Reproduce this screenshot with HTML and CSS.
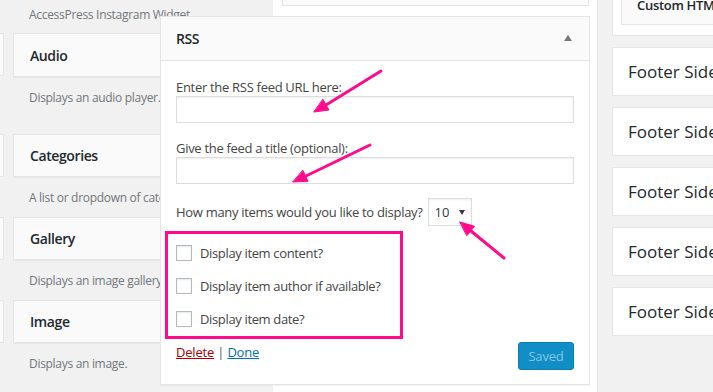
FILE: index.html
```html
<!DOCTYPE html>
<html lang="en">
<head>
  <meta charset="UTF-8">
  <meta name="viewport" content="width=device-width, initial-scale=1">
  <title>Widgets</title>
  <link rel="stylesheet" href="styles.css">
</head>
<body>
  <div class="screen">
    <!-- Доступные виджеты -->
    <div class="available">
      <p class="widget-desc first-desc">AccessPress Instagram Widget</p>
      <div class="row">
        <div class="stub"></div>
        <div class="widget">
          <div class="widget-top tall">Audio</div>
          <p class="widget-desc wide-gap">Displays an audio player.</p>
        </div>
      </div>
      <div class="row">
        <div class="stub"></div>
        <div class="widget">
          <div class="widget-top">Categories</div>
          <p class="widget-desc">A list or dropdown of categories.</p>
        </div>
      </div>
      <div class="row">
        <div class="stub"></div>
        <div class="widget">
          <div class="widget-top">Gallery</div>
          <p class="widget-desc">Displays an image gallery.</p>
        </div>
      </div>
      <div class="row">
        <div class="stub"></div>
        <div class="widget">
          <div class="widget-top">Image</div>
          <p class="widget-desc">Displays an image.</p>
        </div>
      </div>
    </div>

    <!-- Основной сайдбар с открытым виджетом RSS -->
    <div class="sidebar-main">
      <div class="prev-widget"></div>
      <div class="rss">
        <div class="rss-head">
          <span class="rss-title">RSS</span>
          <span class="toggle"></span>
        </div>
        <div class="rss-body">
          <label class="field-label" for="rssUrl">Enter the RSS feed URL here:</label>
          <input class="text-input" id="rssUrl" type="text">
          <label class="field-label gap" for="rssTitle">Give the feed a title (optional):</label>
          <input class="text-input" id="rssTitle" type="text">
          <div class="items-row">
            <span>How many items would you like to display?</span>
            <span class="select-wrap">
              <select class="count-select">
                <option>10</option>
              </select>
            </span>
          </div>
          <div class="options">
            <label class="option"><input type="checkbox" class="check"> Display item content?</label>
            <label class="option"><input type="checkbox" class="check"> Display item author if available?</label>
            <label class="option"><input type="checkbox" class="check"> Display item date?</label>
          </div>
          <div class="rss-foot">
            <span class="links"><a href="#" class="link-delete">Delete</a> <span class="sep">|</span> <a href="#" class="link-done">Done</a></span>
            <button class="btn-saved" disabled>Saved</button>
          </div>
        </div>
      </div>
    </div>

    <!-- Свернутые сайдбары -->
    <div class="sidebar-right">
      <div class="holder">
        <div class="custom-html">Custom HTML</div>
      </div>
      <div class="collapsed">Footer Sidebar 1</div>
      <div class="collapsed">Footer Sidebar 2</div>
      <div class="collapsed">Footer Sidebar 3</div>
      <div class="collapsed">Footer Sidebar 4</div>
      <div class="collapsed">Footer Sidebar 5</div>
    </div>

    <!-- Стрелки-пометки -->
    <svg class="marks" width="713" height="392" viewBox="0 0 713 392">
      <g stroke="#ff0a8c" stroke-width="3" stroke-linecap="round" fill="#ff0a8c">
        <line x1="381" y1="71" x2="326" y2="105"/>
        <polygon points="314,112 329,110 323,99.6" stroke-width="1"/>
        <line x1="370" y1="145" x2="306" y2="176"/>
        <polygon points="293,182 308,181.3 303,170.5" stroke-width="1"/>
        <line x1="504" y1="258" x2="471" y2="231"/>
        <polygon points="460,222 474.6,226.3 467,235.5" stroke-width="1"/>
      </g>
    </svg>
  </div>
</body>
</html>
```

FILE: styles.css
```css
/* Общие */
body { margin:0; background:#f1f1f1; font-family:'Open Sans', 'Noto Sans', sans-serif; font-size:13px; color:#444; }
.screen { position:relative; display:flex; width:713px; height:392px; overflow:hidden; }
p { margin:0; }

/* Левая колонка */
.available { flex:none; width:273px; padding-top:6px; box-sizing:border-box; }
.row { display:flex; gap:9px; margin-left:-16px; }
.stub { flex:none; width:20px; height:43px; box-sizing:border-box; background:#fafafa; border:1px solid #e5e5e5; }
.widget { flex:none; width:250px; }
.widget-top { height:43px; box-sizing:border-box; display:flex; align-items:center; padding-left:16px; background:#fafafa; border:1px solid #e5e5e5; box-shadow:0 1px 1px rgba(0,0,0,0.04); color:#23282d; font-size:14px; font-weight:600; letter-spacing:-0.4px; }
.widget-top.tall { height:44px; }
.widget-desc { margin:12px 0 10px; padding-left:16px; font-size:12px; line-height:18px; letter-spacing:-0.3px; color:#72777c; white-space:nowrap; }
.widget-desc.wide-gap { margin-bottom:27px; }
.first-desc { margin:0 0 9px; padding-left:29px; }

/* Основной сайдбар */
.sidebar-main { flex:none; width:325px; box-sizing:border-box; background:#fff; border-right:1px solid #e2e4e7; padding:0 8px 0 9px; }
.prev-widget { height:36px; margin-top:-30px; box-sizing:border-box; background:#fafafa; border:1px solid #e5e5e5; }

.rss { position:relative; z-index:1; width:430px; margin:10px 0 0 -122px; box-sizing:border-box; background:#fff; border:1px solid #e5e5e5; box-shadow:0 1px 1px rgba(0,0,0,0.04); }
.rss-head { height:44px; box-sizing:border-box; display:flex; align-items:center; justify-content:space-between; padding:0 17px 0 15px; background:#fafafa; border-bottom:1px solid #e5e5e5; }
.rss-title { font-size:14px; font-weight:600; color:#23282d; letter-spacing:-0.4px; }
.toggle { width:0; height:0; border-left:4px solid transparent; border-right:4px solid transparent; border-bottom:6px solid #72777c; margin-top:-2px; }

.rss-body { padding:18px 15px 14px; }
.field-label { display:block; line-height:17px; letter-spacing:-0.3px; }
.field-label.gap { margin-top:17px; }
.text-input { display:block; width:100%; height:27px; box-sizing:border-box; margin:0; border:1px solid #ddd; box-shadow:inset 0 1px 2px rgba(0,0,0,0.07); background:#fff; }

.items-row { display:flex; align-items:center; gap:5px; margin-top:14px; height:28px; letter-spacing:-0.3px; }
.select-wrap { position:relative; display:inline-block; }
.select-wrap::after { content:""; position:absolute; right:7px; top:12px; border-left:3px solid transparent; border-right:3px solid transparent; border-top:5px solid #32373c; pointer-events:none; }
.count-select { appearance:none; -webkit-appearance:none; width:44px; height:28px; margin:0; padding:0 0 0 6px; border:1px solid #ddd; border-radius:0; background:#fff; font-family:inherit; font-size:13px; color:#32373c; box-shadow:inset 0 1px 2px rgba(0,0,0,0.07); }

.options { display:flex; flex-direction:column; gap:17px; width:238px; box-sizing:border-box; margin:5px 0 0 -11px; padding:11px 8px 9px; border:3px solid #ff0a8c; }
.option { display:flex; align-items:center; gap:8px; height:16px; letter-spacing:-0.35px; white-space:nowrap; }
.check { appearance:none; -webkit-appearance:none; margin:0; width:16px; height:16px; border:1px solid #b4b9be; background:#fff; box-shadow:inset 0 1px 2px rgba(0,0,0,0.1); }

.rss-foot { display:flex; justify-content:space-between; align-items:flex-start; margin-top:3px; }
.links { padding-top:1px; line-height:18px; letter-spacing:-0.2px; }
.link-delete { color:#a00; }
.link-done { color:#0073aa; }
.sep { color:#555; }
.btn-saved { width:56px; height:28px; margin:0; padding:0; border:1px solid #0a7fb4; border-radius:3px; background:#118ec5; color:#82c6e6; font-family:inherit; font-size:13px; letter-spacing:-0.2px; }

/* Правая колонка */
.sidebar-right { flex:none; width:200px; margin-left:14px; }
.holder { height:56px; margin-top:-20px; box-sizing:border-box; padding:4px 0 0 8px; background:#fff; border:1px solid #e5e5e5; }
.custom-html { padding:10px 15px; line-height:18px; background:#fafafa; border:1px solid #e5e5e5; color:#23282d; font-weight:600; letter-spacing:-0.3px; }
.collapsed { height:49px; box-sizing:border-box; margin-top:11px; display:flex; align-items:center; padding-left:15px; background:#fff; border:1px solid #e5e5e5; font-size:17px; color:#23282d; white-space:nowrap; }

/* Пометки поверх всего */
.marks { position:absolute; left:0; top:0; z-index:2; pointer-events:none; }
```
